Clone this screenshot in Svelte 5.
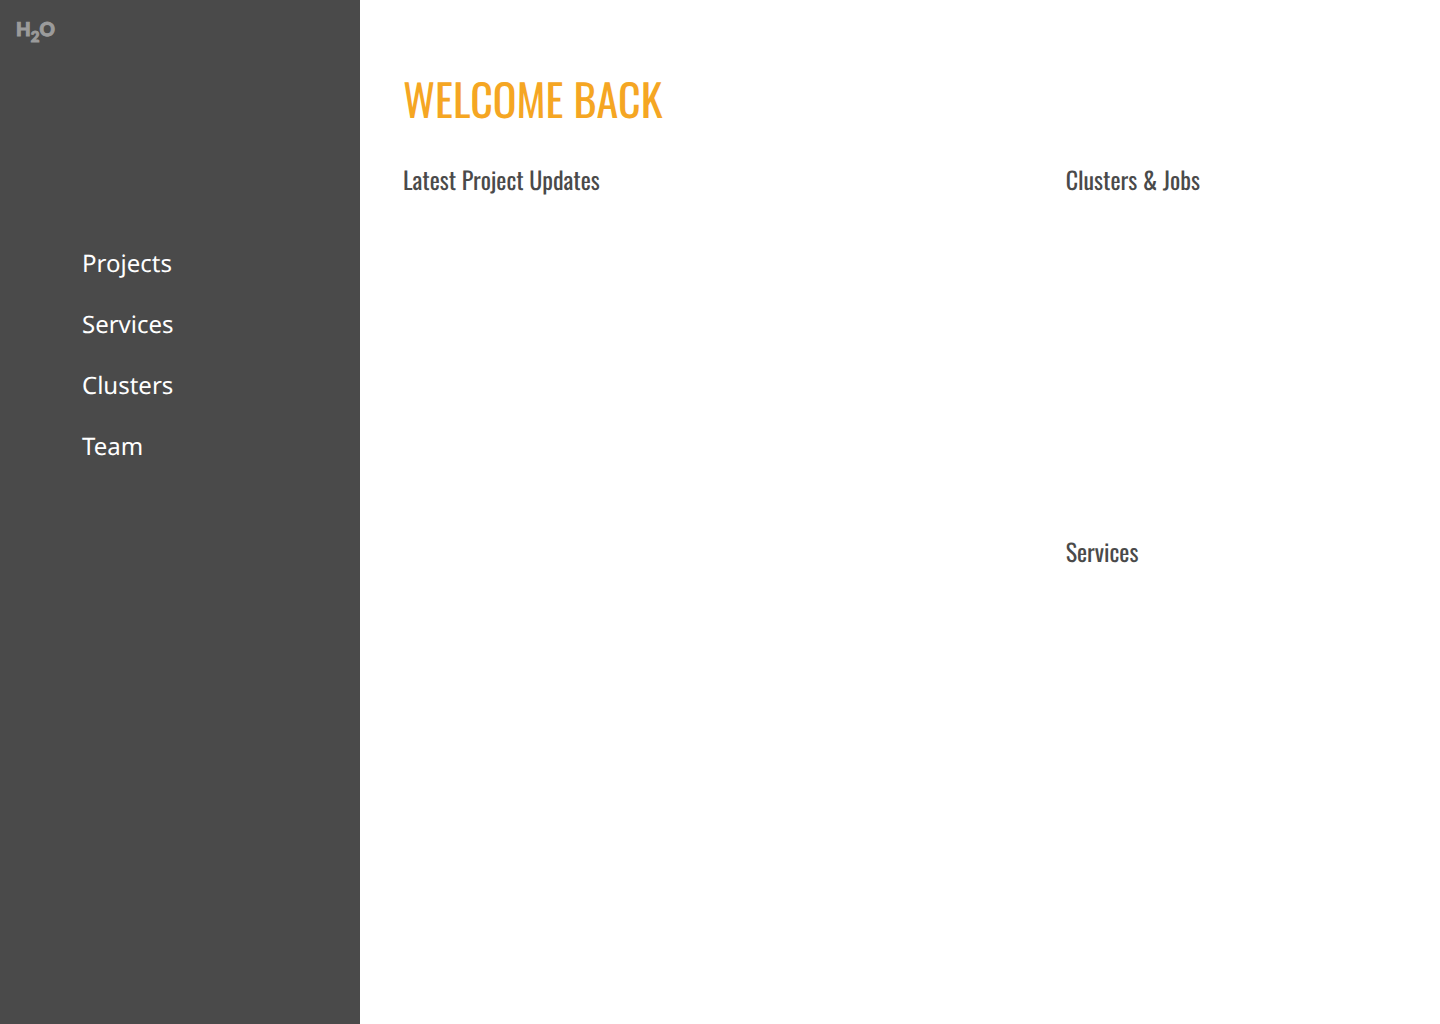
<script>
  const links = ['Projects', 'Services', 'Clusters', 'Team'];
</script>

<div class="layout">
  <aside>
    <a class="logo" href="#home" aria-label="H2O home">H<span class="two">2</span>O</a>
    <nav>
      {#each links as link}
        <a href={'#' + link.toLowerCase()}>{link}</a>
      {/each}
    </nav>
  </aside>
  <main>
    <h1>WELCOME BACK</h1>
    <div class="columns">
      <section><h2>Latest Project Updates</h2></section>
      <div class="side">
        <section class="jobs"><h2>Clusters &amp; Jobs</h2></section>
        <section><h2>Services</h2></section>
      </div>
    </div>
  </main>
</div>

<style>
  :global(body) {
    margin: 0;
    background: #fff;
    text-rendering: geometricPrecision;
  }
  .layout {
    display: grid;
    grid-template-columns: 1fr 3fr;
    min-height: 100vh;
  }
  aside {
    background: #4a4a4a;
  }
  .logo {
    display: flex;
    align-items: baseline;
    padding: 18px 16px 0;
    font: 900 19px/24px Lato, sans-serif;
    color: #9b9b9b;
    -webkit-text-stroke: 1px #9b9b9b;
    text-decoration: none;
  }
  .two {
    font-size: 15px;
    line-height: 14px;
    transform: translateY(6px);
  }
  nav {
    display: flex;
    flex-direction: column;
    align-items: flex-start;
    gap: 28px;
    padding: 205px 80px 0 82px;
  }
  nav a {
    font: 380 24px/33px 'Noto Sans', sans-serif;
    color: #fff;
    text-decoration: none;
  }
  main {
    padding: 63px 43px;
    font-family: Oswald, 'Liberation Sans Narrow', sans-serif;
  }
  h1 {
    margin: 0;
    font-size: 44px;
    font-weight: 400;
    line-height: 72px;
    color: #f5a623;
  }
  .columns {
    display: grid;
    grid-template-columns: 2fr 1fr;
    padding-top: 26px;
  }
  h2 {
    margin: 0;
    font-size: 24px;
    font-weight: 400;
    line-height: 36px;
    color: #4a4a4a;
  }
  .jobs {
    min-height: 372px;
  }
</style>
